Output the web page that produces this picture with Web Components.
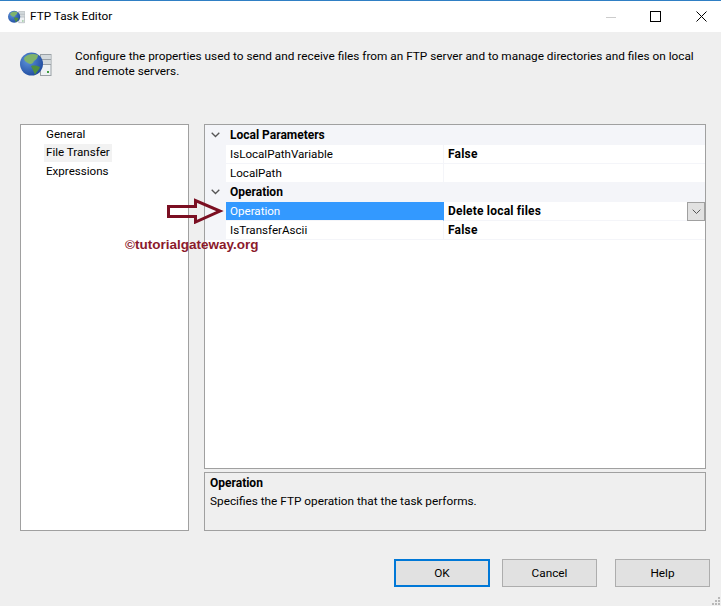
<!DOCTYPE html>
<html>
<head>
<meta charset="utf-8">
<title>FTP Task Editor</title>
<style>
  html, body { margin: 0; padding: 0; height: 100%; background: #efefef; }
  body { font: 11.8px Roboto, sans-serif; color: #000; }
</style>
</head>
<body>
<ftp-dialog>
  <title-bar slot="title">FTP Task Editor</title-bar>
  <dialog-banner slot="banner">Configure the properties used to send and receive files from an FTP server and to manage directories and files on local and remote servers.</dialog-banner>
  <side-nav slot="nav">
    <nav-item>General</nav-item>
    <nav-item active>File Transfer</nav-item>
    <nav-item>Expressions</nav-item>
  </side-nav>
  <prop-grid slot="grid">
    <prop-group first>Local Parameters</prop-group>
    <prop-row name="IsLocalPathVariable" value="False"></prop-row>
    <prop-row name="LocalPath"></prop-row>
    <prop-group>Operation</prop-group>
    <prop-row name="Operation" value="Delete local files" selected></prop-row>
    <prop-row name="IsTransferAscii" value="False"></prop-row>
  </prop-grid>
  <help-box slot="help" heading="Operation">Specifies the FTP operation that the task performs.</help-box>
  <dlg-button slot="ok" primary>OK</dlg-button>
  <dlg-button slot="cancel">Cancel</dlg-button>
  <dlg-button slot="helpbtn">Help</dlg-button>
</ftp-dialog>

<script>
const globeIcon = (w, h) => `
  <svg width="${w}" height="${h}" viewBox="0 0 32 25" style="display:block">
    <defs>
      <radialGradient id="sea" cx="35%" cy="35%" r="75%">
        <stop offset="0" stop-color="#5c93dc"/><stop offset="1" stop-color="#1c479b"/>
      </radialGradient>
    </defs>
    <rect x="20.5" y="2.5" width="10.5" height="21" fill="#eef1f3" stroke="#9aa1a6"/>
    <rect x="21" y="3" width="9.5" height="4" fill="#d3d9dc"/>
    <rect x="21" y="8" width="9.5" height="4" fill="#d3d9dc"/>
    <path d="M21 7.5h10M21 12.5h10" stroke="#9aa1a6"/>
    <rect x="27" y="19" width="2" height="2" fill="#3f9e3f"/>
    <circle cx="11.5" cy="12" r="11.5" fill="url(#sea)"/>
    <path d="M4 6 C7 2 13 1 18 3 C18 6 16 8 14 9 C13 12 10 13 8 11 C6 10 4 9 4 6 Z" fill="#7fb36c"/>
    <path d="M11 14 C14 13 18 14 20 15 C19 18 17 19 15 23 C14 20 13 18 11 14 Z" fill="#4f8f3f"/>
  </svg>`;

class FtpDialog extends HTMLElement {
  connectedCallback() {
    this.attachShadow({ mode: 'open' });
    this.shadowRoot.innerHTML = `
      <style>
        :host { display: flex; flex-direction: column; width: 721px; height: 606px; box-sizing: border-box; overflow: hidden; position: relative; }
        .main { display: flex; gap: 15px; padding: 0 15px 0 20px; height: 407px; margin-top: 0; }
        .left { width: 169px; flex: none; display: flex; }
        .right { flex: 1; display: flex; flex-direction: column; gap: 3px; min-width: 0; }
        .buttons { display: flex; padding: 28px 11px 0 394px; }
        ::slotted([slot=cancel]) { margin-left: 12px; }
        ::slotted([slot=helpbtn]) { margin-left: 18px; }
        .grip { position: absolute; right: 1px; bottom: 1px; }
      </style>
      <slot name="title"></slot>
      <slot name="banner"></slot>
      <div class="main">
        <div class="left"><slot name="nav"></slot></div>
        <div class="right"><slot name="grid"></slot><slot name="help"></slot></div>
      </div>
      <div class="buttons"><slot name="ok"></slot><slot name="cancel"></slot><slot name="helpbtn"></slot></div>
      <svg class="grip" width="8" height="8" viewBox="0 0 8 8" fill="#b8b8b8">
        <rect x="6" y="0" width="2" height="2"/><rect x="3" y="3" width="2" height="2"/><rect x="6" y="3" width="2" height="2"/>
        <rect x="0" y="6" width="2" height="2"/><rect x="3" y="6" width="2" height="2"/><rect x="6" y="6" width="2" height="2"/>
      </svg>`;
  }
}

class TitleBar extends HTMLElement {
  connectedCallback() {
    this.attachShadow({ mode: 'open' });
    this.shadowRoot.innerHTML = `
      <style>
        :host { display: flex; align-items: center; height: 31px; flex: none; background: #fff; border-top: 1px solid #2f7fc4; }
        .icon { margin: 0 5px 0 8px; display: flex; }
        .text { flex: 1; color: #000; padding-bottom: 2px; }
        .ctl { width: 45px; height: 31px; display: flex; align-items: center; justify-content: center; }
        .ctl.close { width: 46px; margin-right: -3px; }
      </style>
      <span class="icon">${globeIcon(17, 14)}</span>
      <span class="text"><slot></slot></span>
      <span class="ctl"><svg width="10" height="10" style="display:block"><path d="M0 5.5h10" stroke="#ccc"/></svg></span>
      <span class="ctl"><svg width="11" height="11" style="display:block"><rect x=".5" y=".5" width="10" height="10" fill="none" stroke="#000"/></svg></span>
      <span class="ctl close"><svg width="11" height="11" style="display:block"><path d="M.5 .5l10 10M10.5 .5l-10 10" stroke="#000" fill="none"/></svg></span>`;
  }
}

class DialogBanner extends HTMLElement {
  connectedCallback() {
    this.attachShadow({ mode: 'open' });
    this.shadowRoot.innerHTML = `
      <style>
        :host { display: flex; height: 92px; flex: none; box-sizing: border-box; padding: 16px 0 0 20px; }
        .icon { width: 55px; flex: none; padding-top: 4px; }
        .text { width: 630px; line-height: 15px; padding-top: 1px; }
      </style>
      <div class="icon">${globeIcon(32, 25)}</div>
      <div class="text"><slot></slot></div>`;
  }
}

class SideNav extends HTMLElement {
  connectedCallback() {
    this.attachShadow({ mode: 'open' });
    this.shadowRoot.innerHTML = `
      <style>
        :host { display: block; flex: 1; background: #fff; border: 1px solid #a0a0a0; padding: 1px 0 0 23px; font-size: 11.6px; }
      </style>
      <slot></slot>`;
  }
}

class NavItem extends HTMLElement {
  connectedCallback() {
    this.attachShadow({ mode: 'open' });
    this.shadowRoot.innerHTML = `
      <style>
        :host { display: block; width: fit-content; height: 18px; line-height: 16px; padding: 0 2px 0 2px; }
        :host(:last-child) { line-height: 18px; }
        :host([active]) { background: #f2f2f2; }
      </style>
      <slot></slot>`;
  }
}

class PropGrid extends HTMLElement {
  connectedCallback() {
    this.attachShadow({ mode: 'open' });
    this.shadowRoot.innerHTML = `
      <style>
        :host { display: block; height: 345px; box-sizing: border-box; background: #fff; border: 1px solid #a0a0a0; }
      </style>
      <slot></slot>`;
  }
}

class PropGroup extends HTMLElement {
  connectedCallback() {
    this.attachShadow({ mode: 'open' });
    this.shadowRoot.innerHTML = `
      <style>
        :host { display: flex; align-items: center; box-sizing: border-box; height: 19px; padding-bottom: 1px; background: #f4f5f9; font-weight: 700; font-size: 12px; }
        :host([first]) { height: 20px; }
        .gutter { width: 25px; flex: none; display: flex; justify-content: center; padding-right: 4px; box-sizing: border-box; }
      </style>
      <span class="gutter"><svg width="9" height="6" viewBox="0 0 9 6"><path d="M.7 .7L4.5 4.5 8.3 .7" fill="none" stroke="#555" stroke-width="1.3"/></svg></span>
      <span><slot></slot></span>`;
  }
}

class PropRow extends HTMLElement {
  connectedCallback() {
    this.attachShadow({ mode: 'open' });
    const name = this.getAttribute('name') || '';
    const value = this.getAttribute('value') || '';
    const selected = this.hasAttribute('selected');
    this.shadowRoot.innerHTML = `
      <style>
        :host { display: flex; height: 19px; box-sizing: border-box; background: #fff; }
        .gutter { width: 21px; flex: none; background: #f4f5f9; }
        .name { width: 218px; flex: none; box-sizing: border-box; padding-left: 4px; line-height: 18px; font-size: 11.6px; border-bottom: 1px solid #f4f5f9; border-right: 1px solid #f4f5f9; }
        .value { flex: 1; position: relative; box-sizing: border-box; padding-left: 4px; line-height: 18px; font-weight: 700; font-size: 12px; letter-spacing: .2px; border-bottom: 1px solid #f4f5f9; }
        :host([selected]) .name { background: #3399ff; color: #fff; border-right-color: #3399ff; }
        .drop { position: absolute; right: 0; top: 0; width: 16px; height: 17px; background: #e1e1e1; border: 1px solid #a0a0a0; display: flex; align-items: center; justify-content: center; }
      </style>
      <div class="gutter"></div>
      <div class="name">${name}</div>
      <div class="value">${value}${selected ? `<span class="drop"><svg width="9" height="6" viewBox="0 0 9 6"><path d="M.7 .7L4.5 4.5 8.3 .7" fill="none" stroke="#555"/></svg></span>` : ''}</div>`;
  }
}

class HelpBox extends HTMLElement {
  connectedCallback() {
    this.attachShadow({ mode: 'open' });
    this.shadowRoot.innerHTML = `
      <style>
        :host { display: block; flex: 1; border: 1px solid #a0a0a0; padding: 1px 5px; line-height: 18px; }
        b { display: block; font-size: 12px; }
      </style>
      <b>${this.getAttribute('heading')}</b>
      <slot></slot>`;
  }
}

class DlgButton extends HTMLElement {
  connectedCallback() {
    this.attachShadow({ mode: 'open' });
    this.shadowRoot.innerHTML = `
      <style>
        :host { display: flex; align-items: center; justify-content: center; box-sizing: border-box; width: 95px; height: 28px; padding-bottom: 1px; background: #e1e1e1; border: 1px solid #adadad; }
        :host([primary]) { width: 96px; border: 2px solid #0078d7; }
      </style>
      <slot></slot>`;
  }
}

class WatermarkNote extends HTMLElement {
  connectedCallback() {
    this.attachShadow({ mode: 'open' });
    this.shadowRoot.innerHTML = `
      <style>
        :host { position: absolute; left: 125px; top: 237px; font: 700 13.5px "Liberation Sans", sans-serif; color: #8b1a2b; white-space: nowrap; }
      </style>
      <slot></slot>`;
  }
}

class CalloutArrow extends HTMLElement {
  connectedCallback() {
    this.attachShadow({ mode: 'open' });
    this.shadowRoot.innerHTML = `
      <style>
        :host { position: absolute; left: 167px; top: 198px; display: block; width: 58px; height: 26px; }
      </style>
      <svg width="58" height="26" viewBox="0 0 58 26" style="display:block"><path d="M1.5 8.5H28.5V2.5L53 13 28.5 24V18.5H1.5Z" fill="none" stroke="#7b0f22" stroke-width="3"/></svg>`;
  }
}

customElements.define('ftp-dialog', FtpDialog);
customElements.define('title-bar', TitleBar);
customElements.define('dialog-banner', DialogBanner);
customElements.define('side-nav', SideNav);
customElements.define('nav-item', NavItem);
customElements.define('prop-grid', PropGrid);
customElements.define('prop-group', PropGroup);
customElements.define('prop-row', PropRow);
customElements.define('help-box', HelpBox);
customElements.define('dlg-button', DlgButton);
customElements.define('watermark-note', WatermarkNote);
customElements.define('callout-arrow', CalloutArrow);

document.body.insertAdjacentHTML('beforeend', '<callout-arrow></callout-arrow><watermark-note>©tutorialgateway.org</watermark-note>');
</script>
</body>
</html>
